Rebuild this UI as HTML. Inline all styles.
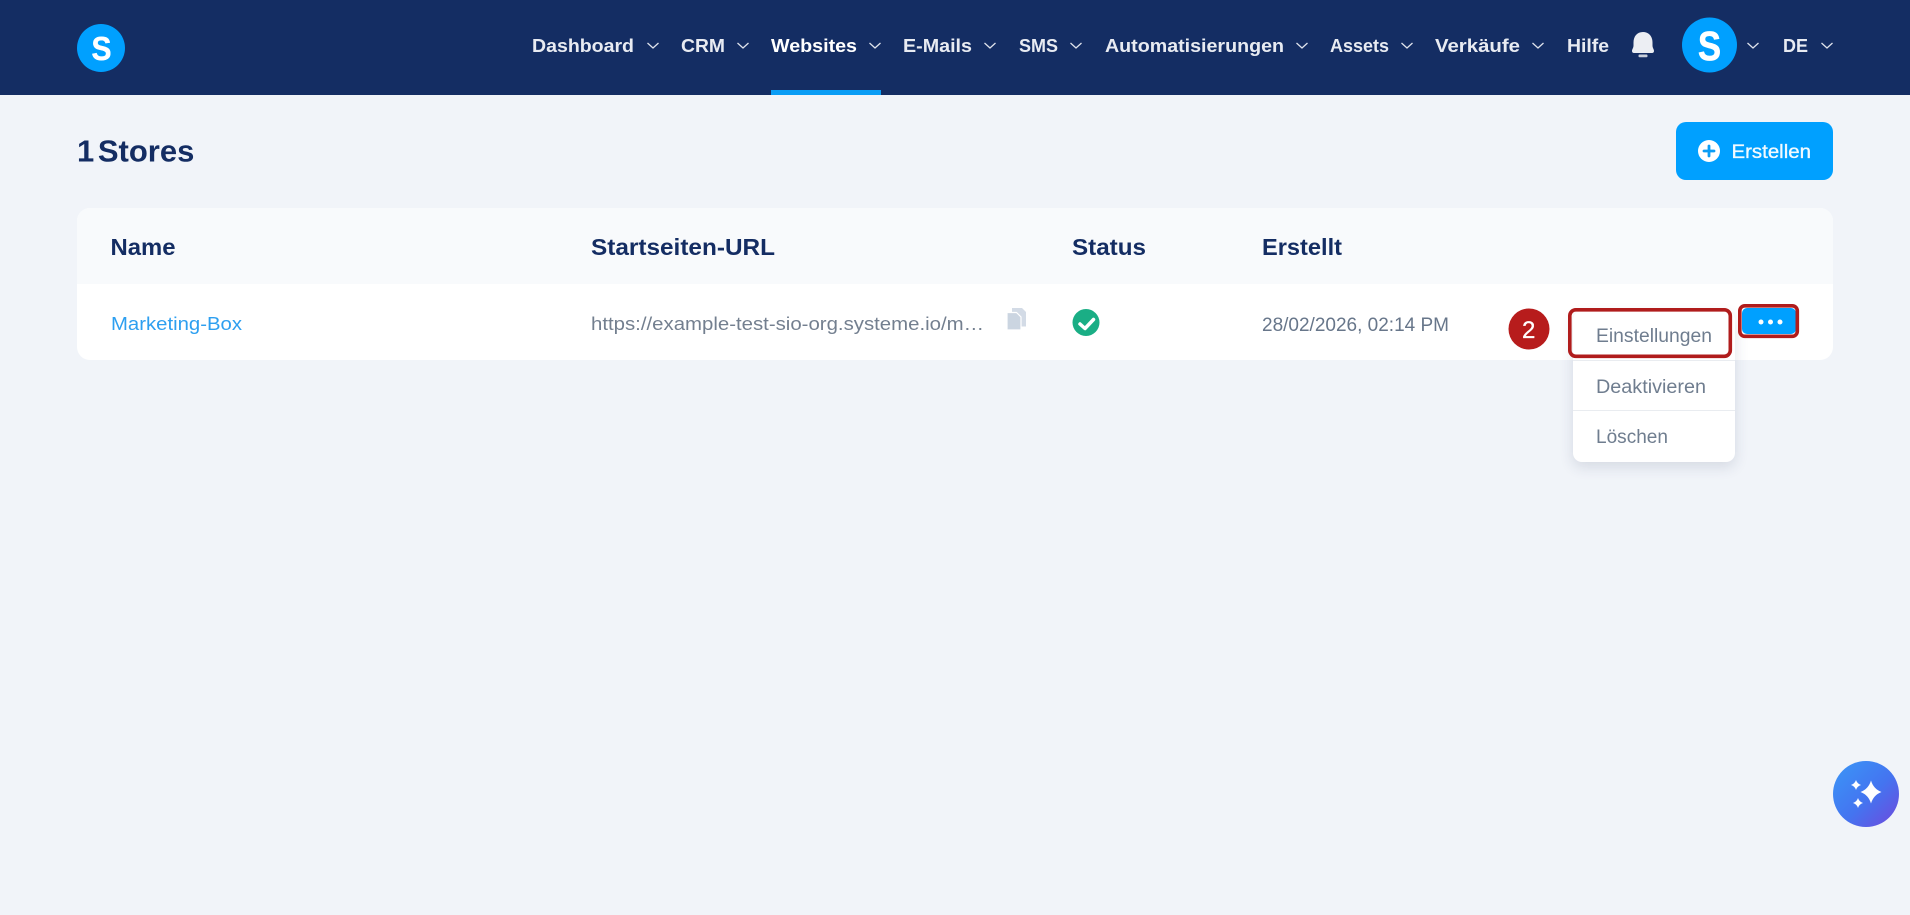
<!DOCTYPE html>
<html lang="de">
<head>
<meta charset="utf-8">
<title>Stores</title>
<style>
html,body{margin:0;padding:0;width:1910px;height:915px;overflow:hidden;background:#f1f4f9;}
body{position:relative;font-family:"Liberation Sans",sans-serif;}
.abs{position:absolute;box-sizing:border-box;}
#hdr{left:0;top:0;width:1910px;height:95px;background:#142d63;}
#ul{left:771px;top:90px;width:110px;height:5px;background:#0a9df5;}
#btn{left:1676px;top:122px;width:157px;height:58px;background:#00a0ff;border-radius:10px;}
#card{left:77px;top:208px;width:1756px;height:152px;background:#fff;border-radius:13px;overflow:hidden;}
#thead{left:0;top:0;width:1756px;height:76px;background:#f8fafc;}
#menu{left:1573px;top:311px;width:162px;height:151px;background:#fff;border-radius:9px;box-shadow:0 5px 14px rgba(40,60,90,.14);}
#s1{left:0;top:49px;width:162px;height:1px;background:#e9ecf0;}
#s2{left:0;top:99px;width:162px;height:1px;background:#e9ecf0;}
#more{left:1742px;top:308px;width:54px;height:26px;background:#00a0ff;border-radius:5px;}
svg{position:absolute;left:0;top:0;}
</style>
</head>
<body>
<div class="abs" id="hdr"></div>
<div class="abs" id="ul"></div>
<div class="abs" id="btn"></div>
<div class="abs" id="card"><div class="abs" id="thead"></div></div>
<div class="abs" id="menu"><div class="abs" id="s1"></div><div class="abs" id="s2"></div></div>
<div class="abs" id="more"></div>
<svg width="1910" height="915" viewBox="0 0 1910 915" xmlns="http://www.w3.org/2000/svg">
<defs>
<linearGradient id="ai" x1="0" y1="0" x2="1" y2="1">
<stop offset="0" stop-color="#3a97f7"/><stop offset=".55" stop-color="#4474f0"/><stop offset="1" stop-color="#6f48dc"/>
</linearGradient>
</defs>
<!-- logo -->
<circle cx="101" cy="48" r="24" fill="#00a0ff"/>
<text x="91.500" y="60" font-size="33" font-weight="700" fill="#fff" stroke="#fff" stroke-width=".5" textLength="20" lengthAdjust="spacingAndGlyphs" font-family="Liberation Sans,sans-serif">S</text>
<!-- nav -->
<g font-family="Liberation Sans,sans-serif" font-size="18" font-weight="700" fill="#e8ebf2">
<text x="532" y="52" textLength="102" lengthAdjust="spacingAndGlyphs">Dashboard</text>
<text x="681" y="52" textLength="44" lengthAdjust="spacingAndGlyphs">CRM</text>
<text x="771" y="52" textLength="86" lengthAdjust="spacingAndGlyphs" fill="#fff">Websites</text>
<text x="903" y="52" textLength="69" lengthAdjust="spacingAndGlyphs">E-Mails</text>
<text x="1019" y="52" textLength="39" lengthAdjust="spacingAndGlyphs">SMS</text>
<text x="1105" y="52" textLength="179" lengthAdjust="spacingAndGlyphs">Automatisierungen</text>
<text x="1330" y="52" textLength="59" lengthAdjust="spacingAndGlyphs">Assets</text>
<text x="1435" y="52" textLength="85" lengthAdjust="spacingAndGlyphs">Verkäufe</text>
<text x="1567" y="52" textLength="42" lengthAdjust="spacingAndGlyphs">Hilfe</text>
<text x="1783" y="52" textLength="25" lengthAdjust="spacingAndGlyphs">DE</text>
</g>
<g fill="none" stroke="#dfe3ec" stroke-width="1.300">
<path d="M647.500 43l5.500 5 5.500-5"/><path d="M737.500 43l5.500 5 5.500-5"/><path d="M869.500 43l5.500 5 5.500-5"/>
<path d="M984.500 43l5.500 5 5.500-5"/><path d="M1070.500 43l5.500 5 5.500-5"/><path d="M1296.500 43l5.500 5 5.500-5"/>
<path d="M1401.500 43l5.500 5 5.500-5"/><path d="M1532.500 43l5.500 5 5.500-5"/><path d="M1747.500 43l5.500 5 5.500-5"/>
<path d="M1821.500 43l5.500 5 5.500-5"/>
</g>
<!-- bell -->
<path d="M1643 32c-6 0-9.500 4.500-9.500 10.500v3c0 2.500-1.500 3.800-1.500 5.500 0 1.200.8 2 2 2h18c1.200 0 2-.8 2-2 0-1.700-1.500-3-1.500-5.500v-3c0-6-3.500-10.500-9.500-10.500z" fill="#eceef3"/>
<rect x="1638.500" y="54.500" width="9" height="2.800" rx="1" fill="#c9cfdb"/>
<!-- avatar -->
<circle cx="1709.500" cy="45" r="27.500" fill="#00a0ff"/>
<text x="1698" y="60" font-size="41" font-weight="700" fill="#fff" stroke="#fff" stroke-width=".7" textLength="23" lengthAdjust="spacingAndGlyphs" font-family="Liberation Sans,sans-serif">S</text>
<!-- title -->
<text x="77" y="161.500" font-size="31" font-weight="700" fill="#142d63" style="word-spacing:-5px" font-family="Liberation Sans,sans-serif">1 Stores</text>
<!-- create -->
<circle cx="1709" cy="151" r="11" fill="#fff"/>
<path d="M1704 151h10M1709 146v10" stroke="#0a9df5" stroke-width="2.800" stroke-linecap="round"/>
<text x="1731.500" y="158" font-size="19.500" fill="#f2faff" stroke="#f2faff" stroke-width=".35" textLength="79.500" lengthAdjust="spacingAndGlyphs" font-family="Liberation Sans,sans-serif">Erstellen</text>
<!-- table header -->
<g font-family="Liberation Sans,sans-serif" font-size="23" font-weight="700" fill="#142d63">
<text x="110.500" y="255" textLength="65" lengthAdjust="spacingAndGlyphs">Name</text>
<text x="591" y="255" textLength="184" lengthAdjust="spacingAndGlyphs">Startseiten-URL</text>
<text x="1072" y="255" textLength="74" lengthAdjust="spacingAndGlyphs">Status</text>
<text x="1262" y="255" textLength="80" lengthAdjust="spacingAndGlyphs">Erstellt</text>
</g>
<!-- row -->
<g font-family="Liberation Sans,sans-serif">
<text x="111" y="330" font-size="18.500" fill="#2d9ff0" textLength="131" lengthAdjust="spacingAndGlyphs">Marketing-Box</text>
<text x="591" y="330" font-size="18" fill="#737f8f" textLength="393" lengthAdjust="spacingAndGlyphs">https://example-test-sio-org.systeme.io/m…</text>
<text x="1262" y="331" font-size="19" fill="#67768a" textLength="187" lengthAdjust="spacingAndGlyphs">28/02/2026, 02:14 PM</text>
</g>
<!-- copy icon -->
<path d="M1012 308h10l4 4v14.500h-14z" fill="#d3dbe6"/>
<path d="M1007 312.500h9.500l4.500 4.500v13h-14z" fill="#cbd5e1" stroke="#fff" stroke-width="1.200"/>
<!-- check -->
<circle cx="1086" cy="322.500" r="13.500" fill="#1aae85"/>
<path d="M1080 324l5 4.500 8.500-9" fill="none" stroke="#fff" stroke-width="3.500" stroke-linecap="round" stroke-linejoin="round"/>
<!-- badge -->
<circle cx="1529" cy="329" r="20.500" fill="#b71c1c"/>
<text x="1522" y="338" font-size="24" fill="#fff" stroke="#fff" stroke-width=".3" font-family="Liberation Sans,sans-serif">2</text>
<!-- dropdown text -->
<g font-family="Liberation Sans,sans-serif" font-size="19" fill="#6f7d8f">
<text x="1596" y="342" textLength="116" lengthAdjust="spacingAndGlyphs">Einstellungen</text>
<text x="1596" y="393" textLength="110" lengthAdjust="spacingAndGlyphs">Deaktivieren</text>
<text x="1596" y="443" textLength="72" lengthAdjust="spacingAndGlyphs">Löschen</text>
</g>
<!-- highlight rects -->
<rect x="1569.800" y="309.800" width="160.500" height="46.500" rx="6" fill="none" stroke="#b01c1c" stroke-width="3.600"/>
<rect x="1739.800" y="305.800" width="57.500" height="30.500" rx="5" fill="none" stroke="#b01c1c" stroke-width="3.600"/>
<!-- dots -->
<circle cx="1761" cy="322" r="2.500" fill="#fff"/><circle cx="1770.500" cy="322" r="2.500" fill="#fff"/><circle cx="1780" cy="322" r="2.500" fill="#fff"/>
<!-- ai -->
<circle cx="1866" cy="794" r="33" fill="url(#ai)"/>
<path d="M1871 780.500q2.500 8.500 10.500 11.500q-8 3-10.500 11.500q-2.500-8.500-10.500-11.500q8-3 10.500-11.500z" fill="#fff"/>
<path d="M1856 780q1.200 3.800 5 5q-3.800 1.200-5 5q-1.200-3.800-5-5q3.800-1.200 5-5z" fill="#fff"/>
<path d="M1858 798q1.200 3.800 5 5q-3.800 1.200-5 5q-1.200-3.800-5-5q3.800-1.200 5-5z" fill="#fff"/>
</svg>
</body>
</html>
